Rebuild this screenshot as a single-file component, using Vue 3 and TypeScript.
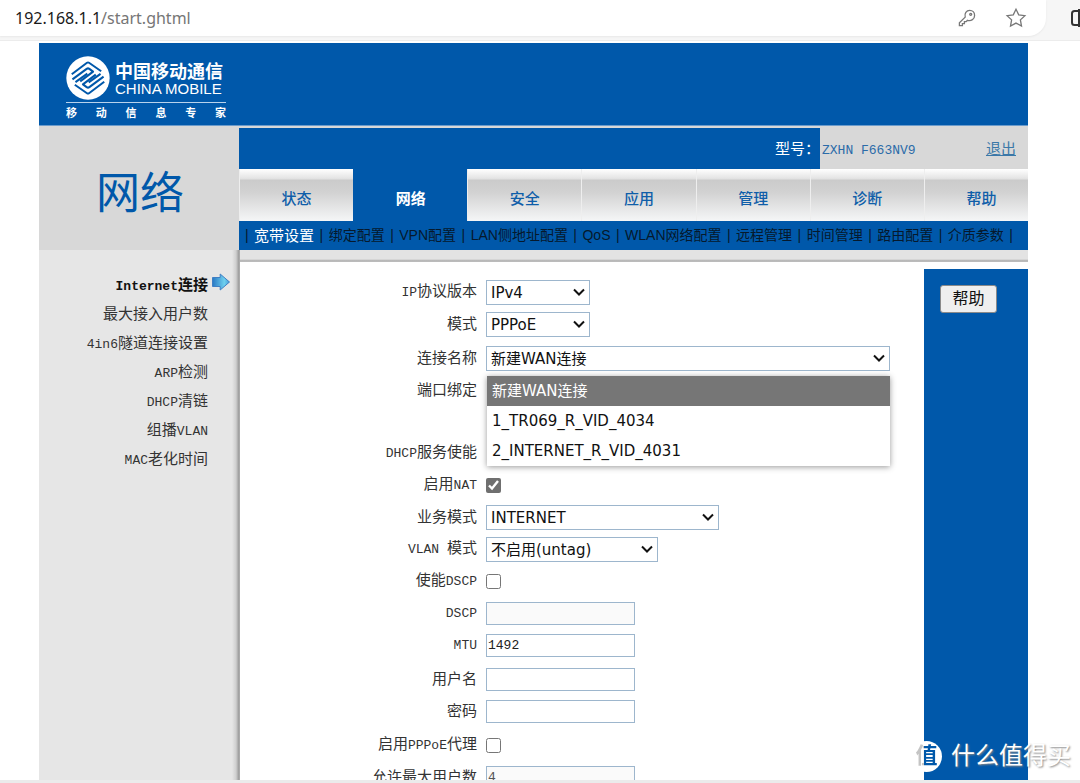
<script setup lang="ts">
import { defineComponent, h, ref } from 'vue'

// Splits a label so that Latin runs use the half-width face beside full-width characters.
const MixedText = defineComponent({
  props: { text: { type: String, required: true } },
  setup(props) {
    return () =>
      h(
        'span',
        { class: 'mixed' },
        (props.text.match(/[\x20-\x7e]+|[^\x20-\x7e]+/g) ?? []).map((run) =>
          /^[\x20-\x7e]/.test(run) ? h('span', { class: 'latin' }, run) : run,
        ),
      )
  },
})

interface Field {
  id: string
  label: string
  kind: 'select' | 'check' | 'text' | 'none'
  size?: string
  value?: string
  checked?: boolean
  disabled?: boolean
  spaced?: boolean
  tall?: boolean
  open?: boolean
}

const tabs = ['状态', '网络', '安全', '应用', '管理', '诊断', '帮助']
const activeTab = ref('网络')
const subTabs = ['宽带设置', '绑定配置', 'VPN配置', 'LAN侧地址配置', 'QoS', 'WLAN网络配置', '远程管理', '时间管理', '路由配置', '介质参数']
const activeSub = ref('宽带设置')
const sideItems = ['Internet连接', '最大接入用户数', '4in6隧道连接设置', 'ARP检测', 'DHCP清链', '组播VLAN', 'MAC老化时间']
const activeSide = ref('Internet连接')
const connections = ['新建WAN连接', '1_TR069_R_VID_4034', '2_INTERNET_R_VID_4031']
const connection = ref(connections[0])
const slogan = ['移', '动', '信', '息', '专', '家']

const fields: Field[] = [
  { id: 'ip', label: 'IP协议版本', kind: 'select', size: 'w-s', value: 'IPv4' },
  { id: 'mode', label: '模式', kind: 'select', size: 'w-s', value: 'PPPoE' },
  { id: 'name', label: '连接名称', kind: 'select', size: 'w-xl', value: '新建WAN连接', spaced: true, open: true },
  { id: 'port', label: '端口绑定', kind: 'none', tall: true },
  { id: 'dhcp', label: 'DHCP服务使能', kind: 'none' },
  { id: 'nat', label: '启用NAT', kind: 'check', checked: true },
  { id: 'service', label: '业务模式', kind: 'select', size: 'w-l', value: 'INTERNET' },
  { id: 'vlan', label: 'VLAN 模式', kind: 'select', size: 'w-m', value: '不启用(untag)' },
  { id: 'dscp-on', label: '使能DSCP', kind: 'check' },
  { id: 'dscp', label: 'DSCP', kind: 'text', value: '', disabled: true },
  { id: 'mtu', label: 'MTU', kind: 'text', value: '1492' },
  { id: 'user', label: '用户名', kind: 'text', value: '', spaced: true },
  { id: 'pass', label: '密码', kind: 'text', value: '' },
  { id: 'proxy', label: '启用PPPoE代理', kind: 'check', spaced: true },
  { id: 'max', label: '允许最大用户数', kind: 'text', value: '4', disabled: true },
]
</script>

<template>
  <div class="window">
    <header class="browser">
      <div class="address">
        <span class="url"><b>192.168.1.1</b>/start.ghtml</span>
        <button class="tool" aria-label="密码">
          <svg width="20" height="20" viewBox="0 0 20 20">
            <path d="M8.2 9.1 2.4 14.8v2.8h3v-1.9h2v-2h1.8l1.2-1.4c3.8 1.2 7.2-1.300 7.200-4.900 0-2.900-2.100-5-4.900-5-3.300 0-5.500 3-4.500 6.700z" />
            <circle cx="13.700" cy="6.300" r="1" />
          </svg>
        </button>
        <button class="tool star" aria-label="收藏">
          <svg width="22" height="22" viewBox="0 0 22 22">
            <path d="M11 2.200l2.700 5.600 6.200.8-4.500 4.300 1.100 6.200-5.500-3-5.500 3 1.100-6.200L2.100 8.600l6.200-.8z" />
          </svg>
        </button>
      </div>
      <button class="split" aria-label="分屏">
        <svg width="18" height="18" viewBox="0 0 18 18">
          <path d="M9 2H4.500Q2 2 2 4.500v9Q2 16 4.500 16H9M9 0v18" />
        </svg>
      </button>
    </header>

    <main class="site">
      <div class="banner">
        <div class="brand">
          <div class="brand-row">
            <svg width="44" height="44" viewBox="0 0 130 130">
              <circle cx="65" cy="65" r="64" fill="#fff" />
              <g fill="none" stroke="#0058aa" stroke-width="6" stroke-linejoin="round">
                <path d="M17 54 62 20q3-2 6 0l36 25" />
                <path d="M19 69 61 38q4-3 8 0l11 8-38 29" />
                <path d="M28 77 63 52" />
                <path d="M113 76 68 110q-3 2-6 0L26 85" />
                <path d="M111 61 69 92q-4 3-8 0l-11-8 38-29" />
                <path d="M102 53 67 78" />
              </g>
            </svg>
            <div class="brand-name"><strong>中国移动通信</strong><span>CHINA MOBILE</span></div>
          </div>
          <div class="slogan"><span v-for="c in slogan" :key="c">{{ c }}</span></div>
        </div>
      </div>

      <div class="head">
        <h1>网络</h1>
        <div class="head-main">
          <div class="device">
            <span class="device-label">型号：</span>
            <div class="device-info"><MixedText text="ZXHN F663NV9" /><a href="#">退出</a></div>
          </div>
          <nav class="tabs">
            <button v-for="t in tabs" :key="t" :class="{ active: t === activeTab }" @click="activeTab = t">{{ t }}</button>
          </nav>
          <nav class="subtabs">
            <i>|</i>
            <template v-for="s in subTabs" :key="s">
              <a href="#" :class="{ active: s === activeSub }" @click.prevent="activeSub = s">{{ s }}</a><i>|</i>
            </template>
          </nav>
        </div>
      </div>

      <div class="body">
        <aside>
          <a v-for="s in sideItems" :key="s" href="#" :class="{ active: s === activeSide }" @click.prevent="activeSide = s">
            <MixedText :text="s" />
            <svg v-if="s === activeSide" width="18" height="18" viewBox="0 0 18 18">
              <defs>
                <linearGradient id="arrow" x1="0" x2="1">
                  <stop offset="0" stop-color="#2878c4" />
                  <stop offset="0.700" stop-color="#6fd0ee" />
                  <stop offset="1" stop-color="#439bd8" />
                </linearGradient>
              </defs>
              <path d="M.5 4.500h7.700V1L17.500 9l-9.300 8v-3.500H.5z" fill="url(#arrow)" stroke="#3f7fc4" />
            </svg>
          </a>
        </aside>
        <form class="settings" @submit.prevent>
          <div v-for="f in fields" :key="f.id" class="row" :class="{ spaced: f.spaced, tall: f.tall }">
            <label :for="f.kind === 'none' ? undefined : f.id"><MixedText :text="f.label" /></label>
            <div v-if="f.kind === 'select'" class="picker" :class="f.size">
              <select v-if="f.open" :id="f.id" v-model="connection">
                <option v-for="c in connections" :key="c">{{ c }}</option>
              </select>
              <select v-else :id="f.id">
                <option>{{ f.value }}</option>
              </select>
              <svg width="12" height="8" viewBox="0 0 12 8"><path d="M1 1.500 6 6.500l5-5" /></svg>
              <ul v-if="f.open" role="listbox">
                <li v-for="c in connections" :key="c" role="option" :aria-selected="c === connection" @click="connection = c">{{ c }}</li>
              </ul>
            </div>
            <input v-else-if="f.kind === 'check'" :id="f.id" type="checkbox" :checked="f.checked" />
            <input v-else-if="f.kind === 'text'" :id="f.id" class="text" type="text" :value="f.value" :disabled="f.disabled" />
          </div>
        </form>
        <section class="help"><button>帮助</button></section>
      </div>
    </main>
    <div class="edge"></div>
    <div class="watermark"><span class="seal"><em>值</em></span><span>什么值得买</span></div>
  </div>
</template>

<style>
body {
  margin: 0;
}
.mixed {
  white-space: pre;
}
.mixed .latin {
  font-family: "Liberation Mono", monospace;
  font-size: 13px;
}
</style>

<style scoped>
* {
  box-sizing: border-box;
}
.window {
  position: relative;
  display: flex;
  flex-direction: column;
  height: 100vh;
  overflow: hidden;
  background: #fff;
  color: #333;
  font: 15px/20px "Liberation Sans", "Noto Sans CJK SC", sans-serif;
}
button {
  padding: 0;
  border: 0;
  background: none;
  font: inherit;
  color: inherit;
}
.browser {
  display: flex;
  flex: none;
  height: 41px;
  background: #f6f6f6;
  border-bottom: 1px solid #ececec;
}
.address {
  display: flex;
  flex: 1;
  align-items: center;
  height: 36px;
  margin-right: 24px;
  padding: 0 19px 0 15px;
  background: #fff;
  border-radius: 0 0 18px 0;
  box-shadow: 0 1px 2px #e8e8e8;
}
.url {
  flex: 1;
  color: #767676;
  font: 16px/24px "Noto Sans", sans-serif;
}
.url b {
  color: #1a1a1a;
  font-weight: 400;
}
.tool,
.split {
  display: flex;
}
.star {
  margin-left: 28px;
}
.tool svg,
.split svg {
  fill: none;
  stroke: #777;
  stroke-width: 1.300;
}
.split {
  flex: none;
  width: 10px;
  height: 36px;
  align-items: center;
  overflow: hidden;
}
.split svg {
  flex: none;
  stroke: #333;
  stroke-width: 2;
}
.site {
  display: flex;
  flex: 1;
  flex-direction: column;
  min-height: 0;
  margin: 2px 52px 0 39px;
}
.banner {
  flex: none;
  height: 83px;
  padding: 13px 27px;
  background: #0058aa;
  border-bottom: 1px solid #6b9bcb;
  color: #fff;
}
.brand {
  width: 160px;
}
.brand-row {
  display: flex;
  gap: 5px;
  padding-bottom: 2px;
  border-bottom: 1px solid #b8d2ec;
}
.brand-row svg {
  flex: none;
}
.brand-name {
  display: flex;
  flex-direction: column;
  padding-top: 6px;
  white-space: nowrap;
}
.brand-name strong {
  font-size: 18px;
  line-height: 20px;
  font-weight: 700;
}
.brand-name span {
  font-size: 15px;
  line-height: 14px;
}
.slogan {
  display: flex;
  justify-content: space-between;
  padding-top: 2px;
  font-size: 11px;
  line-height: 16px;
  font-weight: 700;
}
.head {
  display: grid;
  grid-template-columns: 200px 1fr;
  flex: none;
  height: 124px;
  background: #d8d8d8;
}
h1 {
  margin: 0;
  padding: 42px 0 0 57px;
  color: #0058aa;
  font-size: 44px;
  line-height: 52px;
  font-weight: 400;
}
.head-main {
  padding-top: 2px;
}
.device {
  display: grid;
  grid-template-columns: 1fr 208px;
  height: 41px;
  line-height: 41px;
}
.device-label {
  background: #0058aa;
  color: #fff;
  text-align: right;
}
.device-info {
  display: flex;
  justify-content: space-between;
  padding: 0 12px 0 2px;
  color: #2b6ba8;
}
.device-info a {
  color: #3b78a8;
}
.tabs {
  display: grid;
  grid-template-columns: repeat(6, 114fr) 104fr;
  height: 52px;
  background: #0058aa;
}
.tabs button {
  padding-top: 8px;
  border-left: 1px solid #eee;
  background: linear-gradient(#fff, #e4e4e4 18%, #cbcbcb 22%, #d2d2d2 45%, #f5f6f7);
  color: #0f5ea9;
  font-weight: 500;
}
.tabs button:last-child {
  padding-left: 10px;
}
.tabs button.active {
  border-color: #0058aa;
  background: #0058aa;
  color: #fff;
  font-weight: 700;
}
.subtabs {
  display: flex;
  justify-content: space-between;
  height: 29px;
  padding: 0 15px 0 6px;
  background: #0058aa;
  color: #06192c;
  font-size: 14px;
  line-height: 29px;
  white-space: nowrap;
}
.subtabs i {
  font-style: normal;
}
.subtabs a {
  color: inherit;
  text-decoration: none;
}
.subtabs a.active {
  color: #fff;
  font-size: 15px;
}
.body {
  display: grid;
  grid-template-columns: 201px 1fr 104px;
  flex: 1;
  min-height: 0;
  overflow: hidden;
  background: linear-gradient(#e3e3e3 9px, #aaa 11px, #ccc 12px, #fff 12px);
}
aside {
  display: flex;
  flex-direction: column;
  padding-top: 20px;
  background: linear-gradient(90deg, #e6e6e6 193px, #cfcfcf 197px, #999 200px, #bbb 201px);
}
aside a {
  display: flex;
  justify-content: flex-end;
  width: 169px;
  height: 29px;
  color: #333;
  line-height: 29px;
  text-decoration: none;
}
aside a.active {
  width: 191px;
  gap: 4px;
  color: #111;
  font-weight: 700;
}
aside svg {
  margin-top: 3px;
}
.settings {
  padding-top: 26px;
}
.row {
  display: flex;
  align-items: center;
  gap: 9px;
  height: 32px;
}
.row.spaced {
  margin-top: 2px;
}
.row.tall {
  height: 63px;
  align-items: flex-start;
}
.row.tall label {
  line-height: 32px;
}
.row label {
  width: 237px;
  text-align: right;
  white-space: nowrap;
}
.picker {
  position: relative;
  height: 25px;
}
.picker.w-s {
  width: 104px;
}
.picker.w-m {
  width: 172px;
}
.picker.w-l {
  width: 233px;
}
.picker.w-xl {
  width: 404px;
}
.picker select,
.picker ul {
  font: 15px/20px "DejaVu Sans", "Noto Sans CJK SC", sans-serif;
  color: #111;
}
.picker select {
  width: 100%;
  height: 100%;
  margin: 0;
  padding: 1px 4px 0;
  border: 1px solid #9db6cd;
  border-radius: 0;
  appearance: none;
  background: #fff;
}
.picker svg {
  position: absolute;
  top: 8px;
  right: 5px;
  fill: none;
  stroke: #111;
  stroke-width: 2;
  pointer-events: none;
}
.picker ul {
  position: absolute;
  z-index: 2;
  top: 30px;
  left: 1px;
  right: 0;
  margin: 0;
  padding: 0;
  background: #fff;
  box-shadow: 0 1px 6px #999;
  list-style: none;
}
.picker li {
  height: 30px;
  padding-left: 5px;
  line-height: 31px;
}
.picker li[aria-selected="true"] {
  background: #767676;
  color: #fff;
}
input[type="checkbox"] {
  width: 15px;
  height: 15px;
  margin: 0;
  accent-color: #6f6f6f;
}
.text {
  width: 149px;
  height: 23px;
  padding: 0 1px;
  border: 1px solid #9db6cd;
  background: #fff;
  color: #222;
  font: 13px/20px "Liberation Mono", monospace;
}
.text:disabled {
  background: #fafafa;
  color: #555;
}
.help {
  margin-top: 19px;
  padding: 16px;
  background: #0058aa;
}
.help button {
  width: 57px;
  height: 28px;
  border: 1px solid #8a8a8a;
  border-radius: 3px;
  background: #efefef;
  color: #111;
  font-size: 16px;
}
.edge {
  flex: none;
  height: 3px;
  background: #ebebeb;
}
.watermark {
  position: absolute;
  z-index: 3;
  right: 9px;
  bottom: 11px;
  display: flex;
  align-items: center;
  gap: 9px;
  color: #fff;
  font-size: 24px;
  line-height: 32px;
  text-shadow: 1px 1px 2px #888;
}
.seal {
  width: 31px;
  height: 31px;
  border-radius: 50%;
  background: #fff;
  font-size: 22px;
  line-height: 30px;
  text-align: center;
  text-shadow: none;
}
.seal em {
  background: linear-gradient(90deg, #c4c4c4 9px, #0058aa 9px);
  background-clip: text;
  color: transparent;
  font-style: normal;
  font-weight: 700;
}
</style>
